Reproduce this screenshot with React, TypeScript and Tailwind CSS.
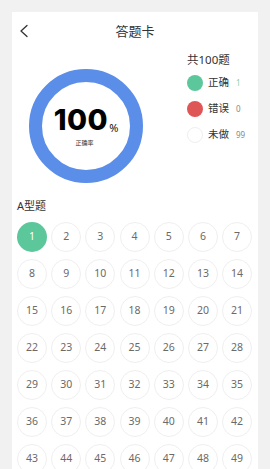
import React from 'react';

type Status = 'right' | 'wrong' | 'todo';

const questions: { no: number; status: Status }[] = Array.from({ length: 100 }, (_, i) => ({
  no: i + 1,
  status: i === 0 ? 'right' : 'todo',
}));

const legend = [
  { label: '正确', count: 1, dot: 'bg-[#5cc79b]', countColor: 'text-[#7fcfb0]' },
  { label: '错误', count: 0, dot: 'bg-[#df5656]', countColor: 'text-[#888888]' },
  { label: '未做', count: 99, dot: 'bg-white border border-[#efefef]', countColor: 'text-[#888888]' },
];

const App: React.FC = () => {
  return (
    <div className="min-h-screen bg-[#f1f1f1] pt-[12px] px-[12px] font-['Noto_Sans','Noto_Sans_CJK_SC',sans-serif]">
      <div className="bg-white min-h-[457px]">
        {/* header */}
        <div className="relative h-[38px] flex items-center justify-center">
          <svg className="absolute left-[5px] top-[12px]" width="14" height="14" viewBox="0 0 14 14" fill="none">
            <path d="M10 1.5 L4 7 L10 12.5" stroke="#333" strokeWidth="1.3" strokeLinecap="round" strokeLinejoin="round" />
          </svg>
          <span className="text-[13px] text-[#333333] mt-[1px]">答题卡</span>
        </div>

        {/* summary */}
        <div className="flex items-start pt-[19px]">
          <div className="ml-[17px] w-[114px] h-[114px] rounded-full border-[13px] border-[#5a8ee8] flex flex-col items-center justify-center">
            <div className="flex items-end -mt-[2px]">
              <span className="font-['Inter',sans-serif] font-extrabold text-[29px] leading-none tracking-[0.5px] text-black">100</span>
              <span className="text-[11px] leading-none text-[#111] ml-[1px] mb-[1px]">%</span>
            </div>
            <span className="text-[6px] leading-none text-[#333] mt-[6px] mr-[3px]">正确率</span>
          </div>

          <div className="ml-[44px] -mt-[15px] flex flex-col">
            <span className="text-[11.5px] text-[#333333] leading-none">共100题</span>
            <div className="mt-[9px] flex flex-col gap-[10px]">
              {legend.map((l) => (
                <div key={l.label} className="flex items-center">
                  <span className={`w-[16px] h-[16px] rounded-full ${l.dot}`} />
                  <span className="ml-[5px] text-[10.5px] text-[#333333] w-[28px]">{l.label}</span>
                  <span className={`text-[8px] ${l.countColor}`}>{l.count}</span>
                </div>
              ))}
            </div>
          </div>
        </div>

        {/* questions */}
        <div className="pt-[17px] pl-[5px]">
          <div className="text-[11px] text-[#333333] leading-none">A型题</div>
          <div className="mt-[11px] grid grid-cols-[repeat(7,30px)] gap-x-[4.2px] gap-y-[7px]">
            {questions.map((q) => (
              <div
                key={q.no}
                className={
                  q.status === 'right'
                    ? 'w-[30px] h-[30px] rounded-full bg-[#5cc79b] text-white flex items-center justify-center text-[10.5px]'
                    : 'w-[30px] h-[30px] rounded-full border border-[#efefef] text-[#6a6a6a] flex items-center justify-center text-[10.5px]'
                }
              >
                {q.no}
              </div>
            ))}
          </div>
        </div>
      </div>
    </div>
  );
};

export default App;
